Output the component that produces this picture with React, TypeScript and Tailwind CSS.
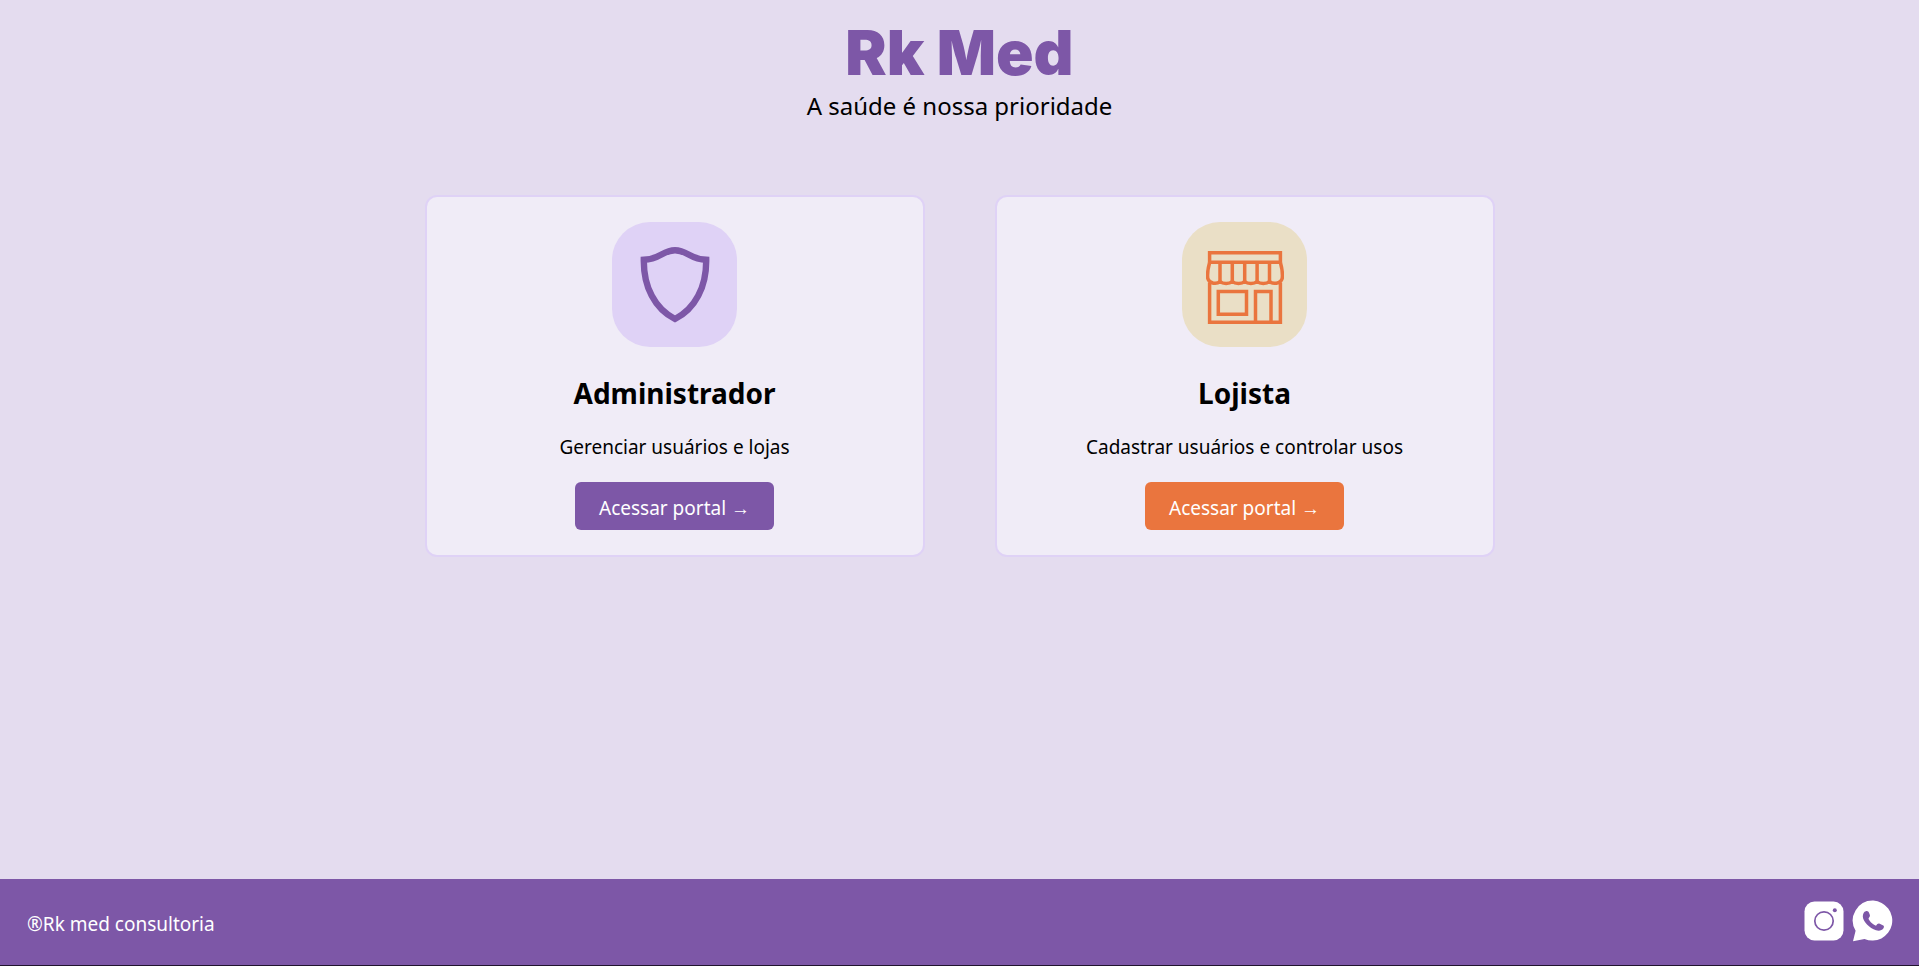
import type { ReactNode } from "react";

type Portal = {
  title: string;
  description: string;
  href: string;
  iconBackground: string;
  buttonColor: string;
  icon: ReactNode;
};

function ShieldIcon() {
  return (
    <svg viewBox="0 0 70 76" className="h-[76px] w-[70px]" fill="none" stroke="#7d57a7" strokeWidth="6.4" aria-hidden="true">
      <path d="M3.800 12.800C20 12.500 22.500 3.200 35 3.200S50 12.500 66.200 12.800C66.500 40 55 62 35 72C15 62 3.500 40 3.800 12.800Z" />
    </svg>
  );
}

function StoreIcon() {
  return (
    <svg viewBox="0 0 78 74" className="mt-1 h-[74px] w-[78px]" fill="none" stroke="#ea753e" strokeWidth="3.500" aria-hidden="true">
      <path d="M3.600 12.500V2.800H74.400V12.500M2.500 12.200H75.500M3.600 32.500V72.200H74.400V32.500" />
      <path d="M3.600 12.500C1.500 20 1.200 24 1.800 28.500C3.500 34.200 11 34.200 14 31.500C17 34.200 23.200 34.200 26.300 31.500C29.400 34.200 35.600 34.200 38.700 31.500C41.800 34.200 48 34.200 51.100 31.500C54.200 34.200 60.400 34.200 63.500 31.500C66.600 34.200 74.500 34.200 76.200 28.500C76.800 24 76.500 20 74.400 12.500" />
      <path d="M14 12.500V31M26.300 12.500V31M38.700 12.500V31M51.100 12.500V31M63.500 12.500V31" />
      <path d="M12.300 41.500H40.500V64.200H12.300ZM49.500 72V41.500H65V72" />
    </svg>
  );
}

function InstagramIcon() {
  return (
    <svg viewBox="0 0 40 40" className="size-10" aria-hidden="true">
      <rect x="0.500" y="0.500" width="39" height="39" rx="10" fill="#fff" />
      <circle cx="20" cy="20" r="9.200" fill="none" stroke="#7d57a7" strokeWidth="1.700" />
      <circle cx="30.800" cy="9.300" r="2" fill="#7d57a7" />
    </svg>
  );
}

function WhatsappIcon() {
  return (
    <svg viewBox="0 0 42 42" className="size-[42px]" aria-hidden="true">
      <path fill="#fff" d="M21.300 0.600A20 20 0 1 1 12.500 39L1 41.200L3.600 30.800A20 20 0 0 1 21.300 0.600Z" />
      <path
        fill="#7d57a7"
        d="M13.800 11.200C15.600 10.800 16.600 11.600 17.200 13.200C18 15.200 18.400 15.800 17.300 17.300C16.200 18.600 16.400 19 17.500 20.600C19.200 23 21.200 24.700 24 25.700C25.200 24.200 26 23.300 27.200 23.600L31.300 25.600C32.300 26.200 32 27.600 31.300 28.600C29.800 30.600 27 31.200 24 30.300C17.500 28.300 11 21.500 10.800 16.500C10.800 13.800 12 11.600 13.800 11.200Z"
      />
    </svg>
  );
}

const portals: Portal[] = [
  {
    title: "Administrador",
    description: "Gerenciar usuários e lojas",
    href: "#administrador",
    iconBackground: "bg-[#dfd2f6]",
    buttonColor: "bg-[#7d57a7]",
    icon: <ShieldIcon />,
  },
  {
    title: "Lojista",
    description: "Cadastrar usuários e controlar usos",
    href: "#lojista",
    iconBackground: "bg-[#eadfc6]",
    buttonColor: "bg-[#ea753e]",
    icon: <StoreIcon />,
  },
];

function PortalCard({ title, description, href, iconBackground, buttonColor, icon }: Portal) {
  return (
    <section className="flex w-full max-w-[500px] flex-col items-center rounded-xl border-2 border-[#dfd2f6] bg-[#f0ecf7] p-[25px]">
      <div className={`flex size-[125px] items-center justify-center rounded-[38px] ${iconBackground}`}>{icon}</div>
      <h2 className="mt-6 text-[28px] leading-[44px] font-bold">{title}</h2>
      <p className="mt-[18px] text-[19px] leading-7">{description}</p>
      <a
        href={href}
        className={`mt-[21px] rounded-md px-6 pt-3 pb-2 text-[19px] leading-7 text-white ${buttonColor}`}
      >
        Acessar portal →
      </a>
    </section>
  );
}

export default function App() {
  return (
    <div className="flex min-h-screen flex-col bg-[#e4dcef] font-['Segoe_UI','Noto_Sans',sans-serif] text-black">
      <header className="flex flex-col items-center pt-4 text-center">
        <h1 className="font-['Arial_Black','Inter',sans-serif] text-[62px] leading-[74px] font-black text-[#7d57a7]">
          Rk Med
        </h1>
        <p className="text-2xl leading-8">A saúde é nossa prioridade</p>
      </header>
      <main className="flex flex-1 flex-wrap items-start justify-center gap-[70px] px-6 pt-[73px] pb-10">
        {portals.map((portal) => (
          <PortalCard key={portal.title} {...portal} />
        ))}
      </main>
      <footer className="flex items-center justify-between border-b border-[#20142e] bg-[#7d57a7] pt-[21px] pr-[25px] pb-[23px] pl-[27px] text-white">
        <p className="pt-[6px] text-[19px] leading-7">®Rk med consultoria</p>
        <nav className="flex items-center gap-2" aria-label="Redes sociais">
          <a href="#instagram" aria-label="Instagram">
            <InstagramIcon />
          </a>
          <a href="#whatsapp" aria-label="WhatsApp">
            <WhatsappIcon />
          </a>
        </nav>
      </footer>
    </div>
  );
}
